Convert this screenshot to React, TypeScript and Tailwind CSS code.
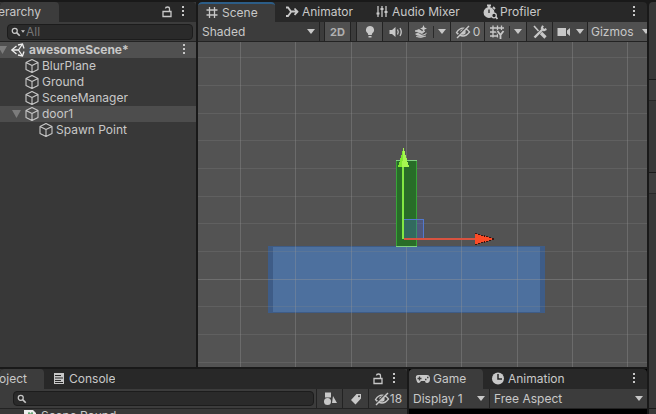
import type { ReactNode } from "react";

function Icon({ children, className = "size-4" }: { children: ReactNode; className?: string }) {
  return (
    <svg viewBox="0 0 16 16" className={`shrink-0 ${className}`} fill="none" stroke="currentColor" strokeWidth="1.3" aria-hidden="true">
      {children}
    </svg>
  );
}

const Cube = () => (
  <Icon>
    <path d="M8 1.500 14 4.600v6.800L8 14.500 2 11.400V4.600zM2 4.600l6 3 6-3M8 7.600v6.900" strokeWidth="1.100" strokeLinejoin="round" />
  </Icon>
);

const Lock = () => (
  <Icon>
    <path d="M4 7.500h8v5H4zM10.500 7.500V4.800Q10.500 3 8.500 3T6.500 4.500" />
  </Icon>
);

const Dots = () => (
  <Icon>
    <path d="M7 2h2v2H7zM7 6h2v2H7zM7 10h2v2H7z" fill="currentColor" stroke="none" />
  </Icon>
);

const Caret = ({ className = "h-[5px] w-2" }: { className?: string }) => (
  <svg viewBox="0 0 8 5" className={`shrink-0 ${className}`} fill="currentColor" aria-hidden="true">
    <path d="M0 0h8L4 5z" />
  </svg>
);

const Foldout = () => (
  <svg viewBox="0 0 9 8" className="h-2 w-[9px] shrink-0 text-[#7c7c7c]" fill="currentColor" aria-hidden="true">
    <path d="M0 0h9L4.500 8z" />
  </svg>
);

const EyeOff = () => (
  <Icon>
    <path d="M1.500 8.500Q4.500 4.200 8 4.200t6.500 3.800Q11.500 12 8 12T1.500 8.500z" />
    <circle cx="8" cy="8" r="2" fill="currentColor" />
    <path d="M2 12.500 12.500 2" strokeWidth="1.400" className="text-[#464646]" />
    <path d="M2 14 14 2" strokeWidth="1.400" />
  </Icon>
);

const Search = () => (
  <Icon className="size-2.5">
    <circle cx="6" cy="6" r="4" strokeWidth="2" />
    <path d="m9 9 5 5" strokeWidth="2.600" />
  </Icon>
);

function Tab({ icon, label, active = false, className = "" }: { icon?: ReactNode; label: string; active?: boolean; className?: string }) {
  return (
    <button
      type="button"
      role="tab"
      aria-selected={active}
      className={`flex h-full shrink-0 items-center gap-0.5 overflow-hidden whitespace-nowrap ${active ? "rounded-t-sm bg-[#3c3c3c]" : ""} ${className}`}
    >
      {icon}
      {label}
    </button>
  );
}

function TabBar({ label, children }: { label: string; children: ReactNode }) {
  return (
    <div role="tablist" aria-label={label} className="flex h-5 shrink-0 items-center overflow-hidden rounded-t-sm bg-[#282828]">
      {children}
    </div>
  );
}

function IconButton({ label, children, className = "" }: { label: string; children: ReactNode; className?: string }) {
  return (
    <button type="button" aria-label={label} className={`flex shrink-0 items-center justify-center ${className}`}>
      {children}
    </button>
  );
}

function Dropdown({ label, value, className }: { label: string; value: string; className: string }) {
  return (
    <label className={`relative flex items-center ${className}`}>
      <select aria-label={label} className="h-full w-full appearance-none bg-transparent pl-1 outline-none">
        <option>{value}</option>
      </select>
      <Caret className="pointer-events-none absolute right-[4px] h-[5px] w-2" />
    </label>
  );
}

function TreeRow({ label, depth, open = false, selected = false }: { label: string; depth: string; open?: boolean; selected?: boolean }) {
  return (
    <li className={`flex h-4 items-center ${depth} ${selected ? "bg-[#4d4d4d]" : ""}`}>
      <span className="flex w-3 shrink-0">{open && <Foldout />}</span>
      <Cube />
      <span className="pl-0.5 whitespace-nowrap">{label}</span>
    </li>
  );
}

function Hierarchy() {
  return (
    <section className="flex w-[196px] shrink-0 flex-col bg-[#383838]">
      <TabBar label="Hierarchy">
        <Tab label="Hierarchy" active className="w-[59px] justify-end pr-[18px]" />
        <IconButton label="Lock" className="ml-auto w-4"><Lock /></IconButton>
        <IconButton label="Hierarchy menu" className="mr-[5px] w-4"><Dots /></IconButton>
      </TabBar>
      <div className="flex h-5 shrink-0 items-center border-b border-[#232323] bg-[#3c3c3c] pr-[3px] pl-[7px]">
        <label className="flex h-4 flex-1 items-center rounded border border-[#1c1c1c] bg-[#2a2a2a] pl-[3px]">
          <Search />
          <Caret className="h-[3px] w-1" />
          <input placeholder="All" aria-label="Search hierarchy" className="w-full min-w-0 bg-transparent pl-px outline-none placeholder:text-[#767676]" />
        </label>
      </div>
      <ul>
        <li className="flex h-4 items-center bg-[#505050] pr-[4px] font-bold">
          <span className="-ml-0.5 flex w-3 shrink-0"><Foldout /></span>
          <Icon className="size-4 text-[#eee]">
            <path d="M6.500 4 1.800 8l4.700 4M8 3l4.500-1L14 6.500M8 13l4.500 1L14 9.500" />
            <path d="M2 8h6.500M8.500 8 12.500 2M8.500 8l4 6" />
          </Icon>
          <span className="flex-1 pl-[3px]">awesomeScene*</span>
          <IconButton label="Scene menu" className="w-4"><Dots /></IconButton>
        </li>
        <TreeRow label="BlurPlane" depth="pl-3" />
        <TreeRow label="Ground" depth="pl-3" />
        <TreeRow label="SceneManager" depth="pl-3" />
        <TreeRow label="door1" depth="pl-3" open selected />
        <TreeRow label="Spawn Point" depth="pl-[26px]" />
      </ul>
    </section>
  );
}

const columns = [42, 97, 153, 208, 263, 319, 374, 429];
const rows = [15, 43, 71, 98, 126, 154, 181, 209, 264, 292, 320];

function SceneCanvas() {
  return (
    <svg className="min-h-0 w-full flex-1 bg-[#535353]" shapeRendering="crispEdges" role="img" aria-label="Scene view">
      <rect x="70" y="204" width="277" height="67" fill="#3e5c87" />
      <rect x="75" y="205" width="267" height="65" fill="#4d709e" />
      {rows.map((y) => <rect key={y} y={y} width="100%" height="1" fill="#888" opacity=".25" />)}
      <rect y="237" width="100%" height="1" fill="#999" opacity=".4" />
      {columns.map((x) => <rect key={x} x={x} width="1" height="100%" fill="#999" opacity=".35" />)}
      <rect x="198.500" y="118.500" width="20" height="86" fill="#286d28" stroke="#37a537" />
      <path d="M198 118.500h21M198 204.500h21" stroke="#80cf80" />
      <rect x="205.500" y="177.500" width="20" height="19" fill="#4664d2" fillOpacity=".32" stroke="#5278ce" />
      <path d="M206 197h71" stroke="#d85340" strokeWidth="2" />
      <path d="M205 197V122" stroke="#82e843" strokeWidth="2" />
      <path d="m205.500 106-5.500 19h11z" fill="#a5f750" />
      <path d="m205.500 106-5.500 19h4z" fill="#80e831" />
      <path d="m277 191 19 6-19 6z" fill="#fb4b26" />
      <path d="m277 191 19 6M277 203l19-6" stroke="#3a1510" strokeDasharray="2 1" />
    </svg>
  );
}

function SceneView() {
  return (
    <section className="flex min-w-0 flex-1 flex-col overflow-hidden">
      <TabBar label="Scene views">
        <Tab
          active
          className="w-[77px] border-t-2 border-[#2c5d87] pl-[6px]"
          label="Scene"
          icon={<Icon><path d="M5.500 2v11M10.500 2v11M2.500 5h11M2.500 10h11" /></Icon>}
        />
        <Tab
          className="w-[92px] pl-[9px]"
          label="Animator"
          icon={<Icon><path d="M2 3.500h2l3 4h7M2 12h2l3-4M10.500 4.500l3 3.200-3 3.200" strokeWidth="1.800" /></Icon>}
        />
        <Tab
          className="w-[107px] pl-[7px]"
          label="Audio Mixer"
          icon={<Icon><path d="M4 2v11M8 2v11M12 2v11" /><path d="M2.500 9.500h3M6.500 5h3M10.500 8h3" strokeWidth="2.200" /></Icon>}
        />
        <Tab
          className="w-[80px] pl-[8px]"
          label="Profiler"
          icon={
            <Icon>
              <circle cx="7" cy="8.500" r="4.800" fill="currentColor" />
              <path d="M5 1.500h4M7 1.500V4M11 3l2 2M13 12l2.500 3" strokeWidth="1.800" />
              <path d="M7 5.500v3.500" stroke="#282828" />
              <circle cx="12" cy="11.500" r="2.300" fill="#282828" />
            </Icon>
          }
        />
        <IconButton label="Scene menu" className="mr-[5px] ml-auto w-4"><Dots /></IconButton>
      </TabBar>
      <div className="flex h-5 shrink-0 items-stretch overflow-hidden border-b border-[#232323] bg-[#3c3c3c]">
        <Dropdown label="Shading mode" value="Shaded" className="w-[122px] shrink-0 border-r border-[#232323]" />
        <button type="button" className="ml-1 w-[27px] shrink-0 border-x border-[#232323] bg-[#505050] text-[11px] font-bold text-[#b0b0b0]">2D</button>
        <IconButton label="Scene lighting" className="ml-[5px] w-[27px] border-x border-[#232323] bg-[#505050]">
          <Icon><path d="M8 2a4 4 0 0 0-2.300 7.300L6.300 11h3.400l.6-1.700A4 4 0 0 0 8 2zM6.500 12h3v1.500h-3z" fill="currentColor" stroke="none" /></Icon>
        </IconButton>
        <IconButton label="Scene audio" className="w-[26px] border-r border-[#232323] bg-[#464646]">
          <Icon><path d="M1.500 6H4l3.500-3v10L4 10H1.500z" fill="currentColor" stroke="none" /><path d="M9.500 5.500q1.500 2.500 0 5M12 4q2.500 4 0 8" /></Icon>
        </IconButton>
        <IconButton label="Scene effects" className="w-[42px] border-r border-[#232323] bg-[#505050]">
          <Icon>
            <path d="M2 10q3-2 5 0t7-1.500q-1 3-5.500 3.500T2 10z" fill="currentColor" stroke="none" />
            <path d="M3 12.500q5 2 10-.5M2 7l4-1.500 3 2 3-.5-3 2.500z" fill="currentColor" strokeWidth=".8" />
            <path d="M10.500 1l1 2.500 2.500 1-2.500 1-1 2.500-1-2.500-2.500-1 2.500-1z" fill="currentColor" stroke="none" />
          </Icon>
          <span className="mx-1 h-3 w-px bg-[#2a2a2a]" />
          <Caret />
        </IconButton>
        <button type="button" aria-label="Hidden objects: 0" className="flex w-[34px] shrink-0 items-center justify-center gap-0.5 border-r border-[#232323] bg-[#505050]">
          <EyeOff />0
        </button>
        <IconButton label="Grid" className="w-[42px] border-r border-[#232323] bg-[#505050]">
          <Icon>
            <path d="M4 1.500v12M8.500 1.500v12M12.500 1.500V6M1 4h14M1 8h7M1 12h7" />
            <path d="m8 6.500 3.500 4.500L15 6.500M11.500 10.500v5" strokeWidth="3.600" className="text-[#505050]" />
            <path d="m8.500 7 3 4 3-4M11.500 10.500V15" strokeWidth="1.800" />
          </Icon>
          <span className="mx-1 h-3 w-px bg-[#2a2a2a]" />
          <Caret />
        </IconButton>
        <IconButton label="Tools" className="w-[26px] border-r border-[#232323] bg-[#464646]">
          <Icon>
            <path d="m2 2 4.500 5" strokeWidth="1.600" />
            <path d="m9 9 4.500 4.500" strokeWidth="3.200" />
            <path d="m2.500 13.500 8-8" strokeWidth="2.400" />
            <path d="M11 1.800 9.800 4l2.200 2.200 2.400-1.200" strokeWidth="2" />
          </Icon>
        </IconButton>
        <IconButton label="Scene camera" className="w-[35px] gap-1 border-r border-[#232323] bg-[#464646]">
          <Icon><path d="M1.500 4H10v8H1.500zM11 6.500 14 4v8l-3-2.500z" fill="currentColor" stroke="none" /></Icon>
          <Caret />
        </IconButton>
        <button type="button" className="flex min-w-[59px] flex-1 shrink-0 items-center bg-[#505050] pl-[3px]">
          Gizmos
          <span className="mx-1 h-3 w-px bg-[#2a2a2a]" />
          <Caret />
        </button>
      </div>
      <SceneCanvas />
    </section>
  );
}

function Project() {
  return (
    <section className="flex w-[407px] shrink-0 flex-col overflow-hidden bg-[#383838]">
      <TabBar label="Project">
        <Tab label="Project" active className="w-11 justify-end pr-[17px]" />
        <Tab
          label="Console"
          className="pl-[7px]"
          icon={<Icon><path d="M3 2h10v11H3z" fill="currentColor" stroke="none" /><path d="M4 4.500h6M4 7h8M4 9.500h6M4 11.500h8" stroke="#282828" strokeWidth="1" /></Icon>}
        />
        <IconButton label="Lock" className="ml-auto w-4"><Lock /></IconButton>
        <IconButton label="Project menu" className="mr-[5px] w-4"><Dots /></IconButton>
      </TabBar>
      <div className="flex h-5 shrink-0 border-b border-[#232323] bg-[#3c3c3c] pl-[13px]">
        <label className="my-0.5 mr-0.5 flex flex-1 items-center rounded border border-[#1c1c1c] bg-[#2a2a2a] pl-[3px]">
          <Search />
          <input aria-label="Search project" className="w-full min-w-0 bg-transparent outline-none" />
        </label>
        <IconButton label="Search by type" className="w-[26px] border-l border-[#232323]">
          <Icon><path d="M3 1.500h6v5H3zM11 5l4 7h-5z" fill="currentColor" stroke="none" /><circle cx="5.500" cy="10.500" r="3.500" fill="currentColor" stroke="none" /></Icon>
        </IconButton>
        <IconButton label="Search by label" className="w-[26px] border-l border-[#232323]">
          <Icon><path fillRule="evenodd" d="M8.500 3H13v4.500L7.500 13.500 3 9zM11 4.200a1 1 0 1 0 0 2 1 1 0 0 0 0-2z" fill="currentColor" stroke="none" /></Icon>
        </IconButton>
        <button type="button" aria-label="Hidden packages: 18" className="flex w-[39px] shrink-0 items-center justify-center border-l border-[#232323]">
          <EyeOff />18
        </button>
      </div>
      <div className="flex h-[5px] overflow-hidden pl-6">
        <svg viewBox="0 0 12 14" className="mt-px h-3.5 w-3 shrink-0" aria-hidden="true">
          <path d="M0 0h9l3 3v11H0z" fill="#eee" />
          <path d="M5 2v6M8 2v6M4 4h5" stroke="#388e4c" />
        </svg>
        <span className="pl-[5px] leading-3.5 whitespace-nowrap">Scene Round</span>
      </div>
    </section>
  );
}

function Game() {
  return (
    <section className="flex min-w-0 flex-1 flex-col overflow-hidden bg-black">
      <TabBar label="Game views">
        <Tab
          active
          label="Game"
          className="w-[74px] pl-[6px]"
          icon={
            <Icon>
              <path d="M4 4h8q3 0 3 3.800T12.500 12 10 10H6q-1 2-2.500 2T1 7.800 4 4z" fill="currentColor" stroke="none" />
              <path d="M4.500 5.500v4M2.500 7.500h4M10 8.500h1.500M12 6.500h1.500" stroke="#3c3c3c" />
            </Icon>
          }
        />
        <Tab
          label="Animation"
          className="pl-[7px]"
          icon={<Icon><circle cx="8" cy="7.500" r="6" fill="currentColor" stroke="none" /><path d="M8 3v5h4" stroke="#282828" strokeWidth="1.500" /></Icon>}
        />
        <IconButton label="Game menu" className="mr-[5px] ml-auto w-4"><Dots /></IconButton>
      </TabBar>
      <div className="flex h-5 shrink-0 border-b border-[#232323] bg-[#3c3c3c]">
        <Dropdown label="Display" value="Display 1" className="w-[81px] border-r border-[#232323]" />
        <Dropdown label="Aspect ratio" value="Free Aspect" className="min-w-0 flex-1" />
      </div>
    </section>
  );
}

export default function App() {
  return (
    <main className="flex h-screen gap-0.5 overflow-hidden bg-[#191919] pt-0.5 font-['Inter',sans-serif] text-[12px] leading-4 text-[#c8c8c8]">
      <div className="flex min-w-0 flex-1 flex-col gap-0.5">
        <div className="flex min-h-0 flex-1 gap-0.5">
          <Hierarchy />
          <SceneView />
        </div>
        <div className="flex gap-0.5">
          <Project />
          <Game />
        </div>
      </div>
      <aside aria-label="Inspector" className="flex w-[7px] shrink-0 flex-col rounded-tl-sm bg-[#383838]">
        <div className="h-[78px] border-b border-[#1a1a1a]" />
        <div className="h-[21px] border-b border-[#282828] bg-[#3e3e3e]" />
        <div className="h-[72px] border-b border-[#1a1a1a]" />
        <div className="h-[21px] border-b border-[#282828] bg-[#3e3e3e]" />
        <div className="flex-1" />
        <div className="h-[6px] border-t border-[#1a1a1a]" />
      </aside>
    </main>
  );
}
